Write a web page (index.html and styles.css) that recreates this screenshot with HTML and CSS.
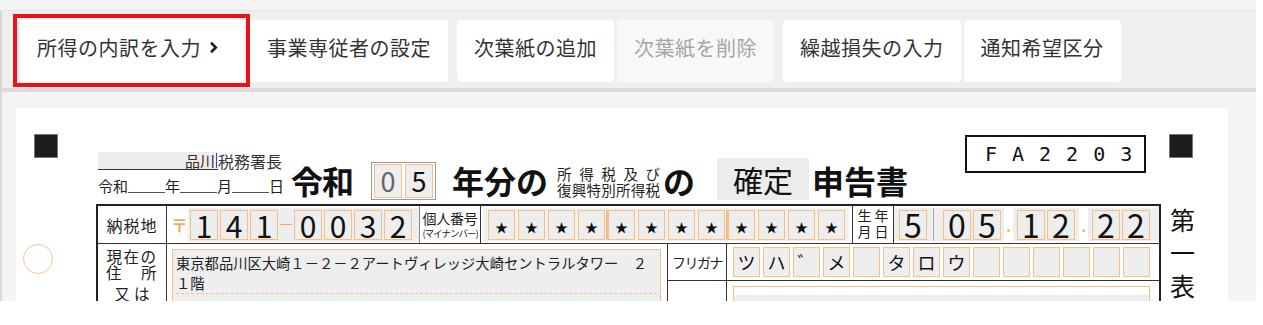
FILE: index.html
```html
<!DOCTYPE html>
<html lang="ja">
<head>
<meta charset="utf-8">
<title>確定申告書</title>
<link rel="stylesheet" href="styles.css">
</head>
<body>
<div class="app">
  <div class="topband"></div>
  <nav class="toolbar">
    <button class="tbtn current">所得の内訳を入力<svg class="chev" width="9" height="13" viewBox="0 0 9 13"><path d="M2 1.8 6.8 6.5 2 11.2" fill="none" stroke="#222" stroke-width="2.6"/></svg></button>
    <button class="tbtn after-current">事業専従者の設定</button>
    <button class="tbtn grp">次葉紙の追加</button>
    <button class="tbtn disabled">次葉紙を削除</button>
    <button class="tbtn grp">繰越損失の入力</button>
    <button class="tbtn">通知希望区分</button>
  </nav>
  <main class="workspace">
    <section class="sheet">
      <div class="margin-l">
        <div class="mark"></div>
        <div class="punch"></div>
      </div>
      <div class="form">
        <header class="form-head">
          <div class="office">
            <div class="office-line1">
              <div class="office-field">品川<span class="caret"></span></div>
              <span class="office-suffix">税務署長</span>
            </div>
            <div class="office-line2">
              <span>令和</span><span class="blank"></span><span>年</span><span class="blank"></span><span>月</span><span class="blank"></span><span>日</span>
            </div>
          </div>
          <div class="big gengo">令和</div>
          <div class="yearbox">
            <span class="ycell ph">0</span><span class="ycell">5</span>
          </div>
          <div class="big nenbun">年分の</div>
          <div class="taxname">
            <div class="jl">所得税及び</div>
            <div class="jl">復興特別所得税</div>
          </div>
          <div class="big no">の</div>
          <div class="kakutei">確定</div>
          <div class="big shinkoku">申告書</div>
          <div class="fa-box">FA2203</div>
        </header>
        <div class="tbl">
          <div class="row1">
            <div class="c-label">納税地</div>
            <div class="postal">
              <span class="yubin">〒</span>
              <div class="zip">
                <span class="dcell">1</span><span class="dcell">4</span><span class="dcell">1</span>
                <span class="zip-dash"></span>
                <span class="dcell">0</span><span class="dcell">0</span><span class="dcell">3</span><span class="dcell">2</span>
              </div>
            </div>
            <div class="mn-label">
              <div class="mn-main">個人番号</div>
              <div class="mn-sub">(マイナンバー)</div>
            </div>
            <div class="stars">
              <div class="star-grid">
                <span class="star">★</span><span class="star">★</span><span class="star">★</span><span class="star">★</span>
                <span class="star g">★</span><span class="star">★</span><span class="star">★</span><span class="star">★</span>
                <span class="star g">★</span><span class="star">★</span><span class="star">★</span><span class="star">★</span>
              </div>
            </div>
            <div class="dob-label">生年<br>月日</div>
            <div class="dob">
              <div class="dgrp era"><span class="dcell big-d">5</span></div>
              <div class="dgrp yy"><span class="dcell big-d">0</span><span class="dcell big-d">5</span></div>
              <div class="ddot"><i></i></div>
              <div class="dgrp mm"><span class="dcell big-d">1</span><span class="dcell big-d">2</span></div>
              <div class="ddot"><i></i></div>
              <div class="dgrp dd"><span class="dcell big-d">2</span><span class="dcell big-d">2</span></div>
            </div>
          </div>
          <div class="lower">
            <div class="addr-label">
              <div>現在の</div>
              <div class="spread"><span>住</span><span>所</span></div>
              <div class="mata">又は</div>
            </div>
            <div class="addr">
              <div class="addr-field">
                <div class="addr-text">東京都品川区大崎１－２－２アートヴィレッジ大崎セントラルタワー　２<br>１階</div>
              </div>
            </div>
            <div class="furi-label">フリガナ</div>
            <div class="furi">
              <span class="fcell">ツ</span><span class="fcell">ハ</span><span class="fcell">゛</span><span class="fcell">メ</span><span class="fcell"></span><span class="fcell">タ</span><span class="fcell">ロ</span><span class="fcell">ウ</span><span class="fcell"></span><span class="fcell"></span><span class="fcell"></span><span class="fcell"></span><span class="fcell"></span><span class="fcell"></span>
            </div>
            <div class="furi-blank"></div>
            <div class="name">
              <div class="name-box"><div class="name-input"></div></div>
            </div>
          </div>
        </div>
      </div>
      <div class="margin-r">
        <div class="mark"></div>
        <div class="sheet-no">第<br>一<br>表</div>
      </div>
    </section>
  </main>
</div>
</body>
</html>
```

FILE: styles.css
```css
* { box-sizing: border-box; margin: 0; padding: 0; }
body {
  margin: 0;
  background: #fff;
  font-family: "Noto Sans CJK JP", "Noto Sans", sans-serif;
  color: #222;
}
.app {
  width: 1256px;
  height: 301px;
  overflow: hidden;
  background: #f5f3f3;
}
.topband {
  height: 11px;
  background: #f5f4f4;
  border-bottom: 1px solid #e3e3e3;
}
.toolbar {
  display: flex;
  align-items: flex-start;
  gap: 3px;
  height: 81px;
  padding: 9px 0 0 17px;
  background: #efefef;
  border-left: 2px solid #d8d8d8;
  border-bottom: 4px solid #dcdcdc;
}
.tbtn {
  display: flex;
  align-items: center;
  height: 62px;
  padding: 0 17px 8px;
  border: 0;
  border-radius: 4px;
  background: #fff;
  font-family: "Noto Sans CJK JP", sans-serif;
  font-size: 20px;
  font-weight: 400;
  letter-spacing: 0.5px;
  color: #333;
  white-space: nowrap;
}
.tbtn.current {
  position: relative;
  padding-left: 18px;
  padding-right: 26px;
}
.tbtn.current::after {
  content: "";
  position: absolute;
  top: -6px;
  left: -6px;
  right: -6px;
  bottom: -5px;
  border: 4px solid #e8121b;
}
.chev { margin-left: 8px; }
.tbtn.after-current { margin-left: 3px; }
.tbtn.grp { margin-left: 6px; }
.tbtn.disabled { background: #f8f8f8; color: #a5a5a5; }

.workspace {
  height: 209px;
  padding: 16px 28px 0 14px;
  border-left: 2px solid #d8d8d8;
}
.sheet {
  display: flex;
  height: 193px;
  background: #fff;
  overflow: hidden;
}
.margin-l {
  width: 80px;
  flex: none;
  padding: 26px 0 0 18px;
}
.mark {
  width: 24px;
  height: 24px;
  background: #1c1c1c;
  border: 1px solid #777;
}
.punch {
  width: 30px;
  height: 30px;
  margin: 86px 0 0 -11px;
  border: 1.5px solid #f7c48c;
  border-radius: 50%;
}
.margin-r {
  flex: 1;
  padding: 26px 0 0 8px;
}
.sheet-no {
  width: 26px;
  margin: 45px 0 0 1px;
  font-size: 25px;
  line-height: 33px;
  color: #111;
}
.form {
  width: 1065px;
  flex: none;
}

/* header */
.form-head {
  display: flex;
  align-items: flex-end;
  height: 96px;
}
.office {
  margin: 0 0 9px 2px;
}
.office-line1 {
  display: flex;
  align-items: flex-end;
}
.office-field {
  display: flex;
  align-items: center;
  justify-content: flex-end;
  width: 120px;
  height: 18px;
  padding-right: 1px;
  background: #ececec;
  border-bottom: 1px solid #333;
  font-size: 15px;
  line-height: 16px;
  color: #3a2a1a;
}
.caret {
  width: 1px;
  height: 15px;
  margin-left: 1px;
  background: #2450d8;
}
.office-suffix {
  font-size: 16px;
  line-height: 18px;
  color: #333;
}
.office-line2 {
  display: flex;
  align-items: flex-end;
  margin-top: 7px;
  font-size: 15px;
  line-height: 18px;
  color: #222;
}
.blank {
  width: 37px;
  margin-bottom: 2px;
  border-bottom: 1px solid #555;
}
.big {
  font-size: 32px;
  font-weight: 700;
  line-height: 32px;
  margin-bottom: 8px;
  color: #111;
}
.gengo { margin-left: 7px; letter-spacing: -1px; }
.yearbox {
  display: flex;
  gap: 3px;
  height: 38px;
  margin: 0 0 4px 18px;
  padding: 1px 2px;
  border: 1px solid #999;
}
.ycell {
  width: 28px;
  height: 34px;
  border: 1px solid #f3c08a;
  background: #eee;
  font-size: 27px;
  line-height: 32px;
  text-align: center;
  color: #111;
}
.ycell.ph { color: #666; }
.nenbun { margin-left: 16px; }
.taxname {
  width: 103px;
  margin: 0 0 6px 9px;
  font-size: 14.5px;
  line-height: 16px;
  color: #222;
}
.jl {
  text-align: justify;
  text-align-last: justify;
}
.no { margin-left: 3px; }
.kakutei {
  width: 92px;
  height: 42px;
  margin: 0 0 4px 22px;
  background: #ececec;
  font-size: 30px;
  line-height: 42px;
  text-align: center;
  color: #111;
}
.shinkoku { margin-left: 3px; }
.fa-box {
  align-self: flex-start;
  width: 181px;
  height: 38px;
  margin: 27px 15px 0 auto;
  padding-left: 18px;
  border: 2px solid #111;
  font-family: "DejaVu Sans Mono", monospace;
  font-size: 20px;
  line-height: 34px;
  letter-spacing: 15px;
  color: #111;
}

/* table */
.tbl {
  height: 200px;
  border: 2px solid #222;
  border-bottom: 0;
}
.row1 {
  display: flex;
  height: 38px;
  border-bottom: 1px solid #333;
}
.c-label {
  display: flex;
  align-items: center;
  justify-content: center;
  width: 69px;
  border-right: 1px solid #333;
  font-size: 16px;
  letter-spacing: 1px;
}
.postal {
  display: flex;
  align-items: center;
  width: 252px;
  padding-left: 4px;
}
.yubin {
  width: 14px;
  font-size: 17px;
  font-weight: 700;
  line-height: 1;
  color: #f2a85c;
}
.zip {
  display: flex;
  align-items: center;
  gap: 2px;
  flex: 1;
  height: 34px;
  margin-left: 3px;
  padding: 0 7px 0 2px;
  background: #eee;
}
.dcell {
  width: 28px;
  height: 30px;
  border: 1px solid #f3c08a;
  background: #eee;
  font-size: 30px;
  line-height: 28px;
  text-align: center;
  color: #111;
}
.zip-dash {
  width: 12px;
  height: 1.5px;
  background: #f2a85c;
}
.mn-label {
  display: flex;
  flex-direction: column;
  justify-content: center;
  align-items: center;
  width: 62px;
  border-left: 1px solid #888;
  border-right: 1px solid #333;
}
.mn-main { font-size: 14px; line-height: 17px; letter-spacing: -0.3px; }
.mn-sub { font-size: 9.5px; line-height: 12px; letter-spacing: -1px; }
.stars {
  display: flex;
  align-items: center;
  width: 371px;
  padding: 0 3px 0 2px;
}
.star-grid {
  display: flex;
  align-items: center;
  height: 33px;
  width: 366px;
  padding: 0 4px 0 5px;
  background: #f1f1f1;
}
.star {
  display: flex;
  align-items: center;
  justify-content: center;
  width: 27px;
  height: 30px;
  margin-left: 3px;
  padding-top: 4px;
  border: 1px solid #f3c08a;
  background: #eee;
  font-size: 13px;
  color: #111;
}
.star:first-child { margin-left: 0; }
.star.g { box-shadow: -2px 0 0 #f0bd85; }
.dob-label {
  width: 42px;
  padding-top: 1px;
  border-left: 1px solid #333;
  border-right: 1px solid #333;
  font-size: 14px;
  line-height: 16px;
  letter-spacing: 3px;
  text-align: center;
  padding-left: 3px;
}
.dob {
  display: flex;
  flex: 1;
}
.dgrp {
  display: flex;
  align-items: center;
  gap: 2px;
  margin: 2px 0;
  background: #eee;
}
.era { width: 40px; padding-left: 5px; border-right: 1px solid #aaa; }
.yy { width: 70px; padding-left: 9px; }
.mm { width: 66px; padding-left: 4px; }
.dd { flex: 1; padding-left: 4px; }
.big-d { font-size: 32px; line-height: 26px; }
.ddot {
  display: flex;
  align-items: flex-end;
  justify-content: center;
  width: 9px;
  padding-bottom: 11px;
}
.ddot i {
  width: 3px;
  height: 3px;
  border-radius: 50%;
  background: #f5b26b;
}

.lower {
  display: grid;
  grid-template-columns: 69px 500px 60px 1fr;
  grid-template-rows: 37px 80px;
}
.addr-label {
  grid-row: 1 / 3;
  padding-top: 4px;
  border-right: 1px solid #333;
  font-size: 15.5px;
  line-height: 16px;
  text-align: center;
  letter-spacing: 1.5px;
}
.spread {
  display: flex;
  justify-content: space-between;
  width: 52px;
  margin: 0 auto;
}
.mata { margin-top: 5px; letter-spacing: 4px; padding-left: 4px; }
.addr {
  grid-row: 1 / 3;
  padding: 5px 6px 0 5px;
}
.addr-field {
  height: 90px;
  padding: 3px 3px 0;
  border: 1px solid #f3c08a;
  background: #eee;
}
.addr-text {
  height: 41px;
  border-bottom: 1px dashed #f3c08a;
  font-size: 14.3px;
  line-height: 20px;
  white-space: nowrap;
  color: #222;
}
.furi-label {
  display: flex;
  align-items: center;
  justify-content: center;
  border-left: 1px solid #333;
  border-right: 1px solid #333;
  border-bottom: 1px solid #333;
  font-size: 14px;
  letter-spacing: -1.5px;
}
.furi {
  display: flex;
  gap: 3px;
  padding: 3px 0 0 6px;
  border-bottom: 1px solid #333;
}
.fcell {
  width: 27px;
  height: 30px;
  border: 1px solid #f3c08a;
  background: #eee;
  font-size: 18px;
  line-height: 28px;
  text-align: center;
  color: #111;
}
.furi-blank {
  border-left: 1px solid #333;
  border-right: 1px solid #333;
}
.name {
  padding: 5px 9px 0 6px;
}
.name-box {
  padding-top: 8px;
  border: 1px solid #f3c08a;
  background: #fff;
}
.name-input {
  height: 40px;
  background: #eee;
}
```
